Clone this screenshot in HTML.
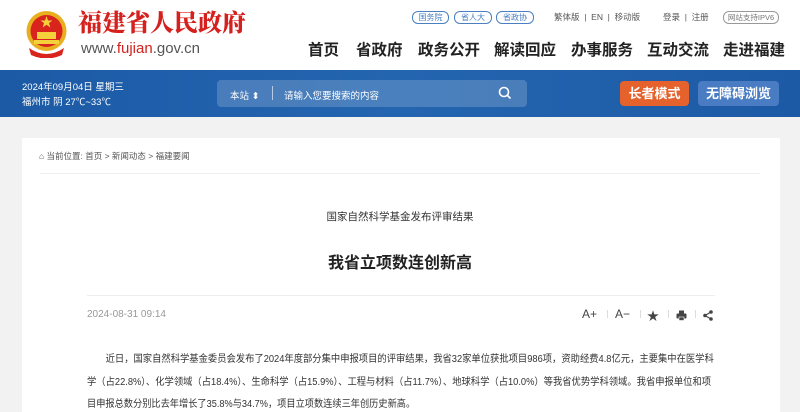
<!DOCTYPE html>
<html><head><meta charset="utf-8"><style>
*{margin:0;padding:0;box-sizing:border-box}
body{width:800px;height:412px;overflow:hidden;background:#f2f2f2;font-family:"Liberation Sans","Noto Sans CJK SC",sans-serif;position:relative}
.abs{position:absolute}
.hdr{left:0;top:0;width:800px;height:70px;background:#fff}
.title{left:78px;top:11px;font-family:"Liberation Serif","Noto Serif CJK SC",serif;font-weight:900;font-size:24px;line-height:26px;color:#d5211d}
.url{left:81px;top:40px;font-size:15px;line-height:17px;color:#555}
.url b{color:#d5211d;font-weight:normal}
.tag{top:11px;height:13px;border:1px solid #4a80c2;border-radius:6px;font-size:8px;color:#4a80c2;line-height:11px;text-align:center}
.tl{top:11px;font-size:8.5px;color:#555}
.nav{top:38px;font-size:15.5px;font-weight:bold;color:#222}
.ban{left:0;top:70px;width:800px;height:47px;background:linear-gradient(90deg,#1c5aa6,#2465b0 50%,#1d5aa5)}
.sb{left:217px;top:80px;width:310px;height:27px;background:rgba(255,255,255,.18);border-radius:4px}
.card{left:22px;top:138px;width:758px;height:274px;background:#fff}
.ln{position:absolute;left:87px;font-size:10px;color:#333;line-height:14px;white-space:nowrap;transform-origin:0 0}
.ic{top:307px;font-size:12px;color:#444}
.sep{top:310px;width:1px;height:8px;background:#ddd}
</style></head><body>
<div class="abs hdr"></div>
<svg class="abs" style="left:24px;top:10px" width="45" height="48" viewBox="0 0 45 48">
<circle cx="22.5" cy="21" r="20" fill="#e8b020"/><circle cx="22.5" cy="21" r="16" fill="#d8241c"/>
<polygon points="22.5,6 24,10.5 28.5,10.5 25,13 26.3,17.5 22.5,14.8 18.7,17.5 20,13 16.5,10.5 21,10.5" fill="#f4d03a"/>
<rect x="13" y="22" width="19" height="7" fill="#f4d03a"/><rect x="10" y="30" width="25" height="4" fill="#f4d03a"/>
<path d="M5 38 Q22.5 50 40 38 L38 45 Q22.5 52 7 45Z" fill="#d8241c"/>
</svg>
<div class="abs title">福建省人民政府</div>
<div class="abs url">www.<b>fujian</b>.gov.cn</div>
<div class="abs tag" style="left:412px;width:37px">国务院</div>
<div class="abs tag" style="left:454px;width:38px">省人大</div>
<div class="abs tag" style="left:496px;width:38px">省政协</div>
<div class="abs tl" style="left:554px">繁体版 &nbsp;|&nbsp; EN &nbsp;|&nbsp; 移动版</div>
<div class="abs tl" style="left:663px">登录 &nbsp;|&nbsp; 注册</div>
<div class="abs tag" style="left:723px;width:56px;border-color:#999;color:#777;font-size:7.5px">网站支持IPV6</div>
<div class="abs nav" style="left:308px">首页</div>
<div class="abs nav" style="left:356px">省政府</div>
<div class="abs nav" style="left:418px">政务公开</div>
<div class="abs nav" style="left:494px">解读回应</div>
<div class="abs nav" style="left:571px">办事服务</div>
<div class="abs nav" style="left:647px">互动交流</div>
<div class="abs nav" style="left:723px">走进福建</div>
<div class="abs ban"></div>
<div class="abs" style="left:22px;top:80px;font-size:9.5px;color:#fff;line-height:15px">2024年09月04日 星期三<br>福州市 阴 27℃~33℃</div>
<div class="abs sb"></div>
<div class="abs" style="left:230px;top:88px;font-size:9.5px;color:#fff">本站 ⬍</div>
<div class="abs" style="left:272px;top:86px;width:1px;height:14px;background:rgba(255,255,255,.6)"></div>
<div class="abs" style="left:284px;top:88px;font-size:9.5px;color:#fff">请输入您要搜索的内容</div>
<svg class="abs" style="left:498px;top:86px" width="14" height="14"><circle cx="6" cy="6" r="4.5" stroke="#fff" stroke-width="1.6" fill="none"/><line x1="9.5" y1="9.5" x2="12.5" y2="12.5" stroke="#fff" stroke-width="1.6"/></svg>
<div class="abs" style="left:620px;top:81px;width:69px;height:25px;background:#e5622d;border-radius:4px;color:#fff;font-weight:bold;font-size:13px;text-align:center;line-height:25px">长者模式</div>
<div class="abs" style="left:698px;top:81px;width:81px;height:25px;background:#4a7cc4;border-radius:4px;color:#fff;font-weight:bold;font-size:13px;text-align:center;line-height:25px">无障碍浏览</div>
<div class="abs card"></div>
<div class="abs" style="left:39px;top:150px;font-size:8.5px;color:#555">⌂ 当前位置: 首页 &gt; 新闻动态 &gt; 福建要闻</div>
<div class="abs" style="left:40px;top:173px;width:720px;height:1px;background:#f0f0f0"></div>
<div class="abs" style="left:0;width:800px;top:209px;text-align:center;font-size:10.5px;color:#333">国家自然科学基金发布评审结果</div>
<div class="abs" style="left:0;width:800px;top:249px;text-align:center;font-size:16px;font-weight:bold;color:#222">我省立项数连创新高</div>
<div class="abs" style="left:87px;top:295px;width:628px;height:1px;background:#eee"></div>
<div class="abs" style="left:87px;top:309px;font-size:10px;color:#999">2024-08-31 09:14</div>
<div class="abs ic" style="left:582px">A+</div>
<div class="abs sep" style="left:607px"></div>
<div class="abs ic" style="left:615px">A−</div>
<div class="abs sep" style="left:640px"></div>
<div class="abs ic" style="left:647px">★</div>
<div class="abs sep" style="left:668px"></div>
<svg class="abs" style="left:676px;top:310px" width="11" height="11" viewBox="0 0 11 11"><rect x="3" y="0.5" width="5" height="3" fill="#444"/><rect x="0.5" y="3.5" width="10" height="5" rx="1" fill="#444"/><rect x="3" y="7" width="5" height="3.5" fill="#444" stroke="#fff" stroke-width=".6"/></svg>
<div class="abs sep" style="left:695px"></div>
<svg class="abs" style="left:703px;top:310px" width="10" height="11" viewBox="0 0 10 11"><line x1="8" y1="2" x2="2" y2="5.5" stroke="#444" stroke-width="1.2"/><line x1="8" y1="9" x2="2" y2="5.5" stroke="#444" stroke-width="1.2"/><circle cx="8" cy="2" r="1.8" fill="#444"/><circle cx="8" cy="9" r="1.8" fill="#444"/><circle cx="2" cy="5.5" r="1.8" fill="#444"/></svg>
<div class="ln" style="top:353px;transform:scaleX(.93)">&emsp;&emsp;近日，国家自然科学基金委员会发布了2024年度部分集中申报项目的评审结果，我省32家单位获批项目986项，资助经费4.8亿元，主要集中在医学科</div>
<div class="ln" style="top:376px;transform:scaleX(.93)">学（占22.8%）、化学领域（占18.4%）、生命科学（占15.9%）、工程与材料（占11.7%）、地球科学（占10.0%）等我省优势学科领域。我省申报单位和项</div>
<div class="ln" style="top:398px;transform:scaleX(.92)">目申报总数分别比去年增长了35.8%与34.7%，项目立项数连续三年创历史新高。</div>
</body></html>
